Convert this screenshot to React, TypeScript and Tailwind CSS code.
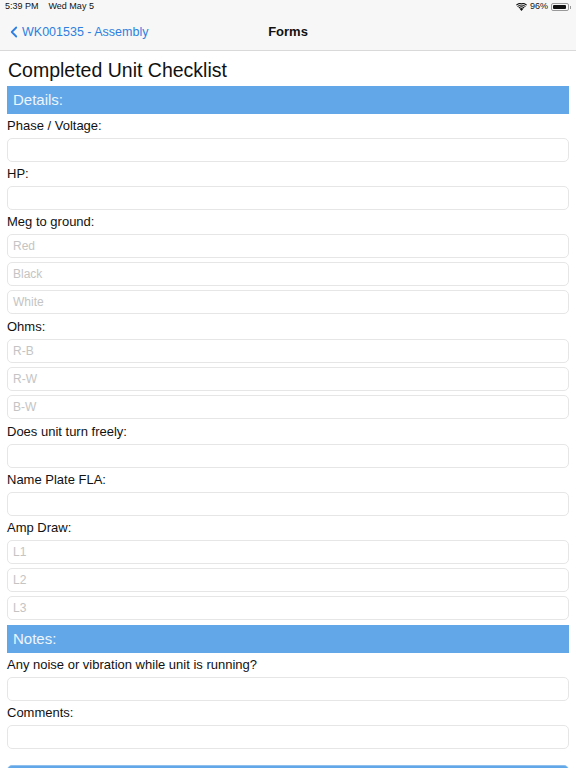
import { ChevronLeft } from 'lucide-react';

function Field({ placeholder }: { placeholder?: string }) {
  return (
    <div className="h-[24px] rounded-[5px] border border-[#e6e6e6] bg-white px-[5px] flex items-center text-[12px] text-[#c4c4c4]">
      {placeholder}
    </div>
  );
}

function Label({ text, tall }: { text: string; tall?: boolean }) {
  return (
    <div className={`${tall ? 'h-[25px]' : 'h-[24px]'} flex items-center text-[13px] text-[#111]`}>{text}</div>
  );
}

function Section({ title }: { title: string }) {
  return (
    <div className="h-[28px] bg-[#62a8e8] flex items-center px-[6px] text-[15px] text-[#eef5fd]">{title}</div>
  );
}

function Group({ label, fields, tall }: { label: string; fields: (string | undefined)[]; tall?: boolean }) {
  return (
    <div>
      <Label text={label} tall={tall} />
      <div className="flex flex-col gap-[4px]">
        {fields.map((f, i) => (
          <Field key={i} placeholder={f} />
        ))}
      </div>
    </div>
  );
}

export default function App() {
  return (
    <div className="w-[576px] h-[768px] overflow-hidden bg-white relative" style={{ fontFamily: '"Liberation Sans", Arial, sans-serif' }}>
      {/* Header */}
      <div className="bg-[#f7f7f7] border-b border-[#d9d9d9] h-[51px]">
        <div className="h-[14px] flex items-center justify-between px-[5px] text-[9px] text-[#111]">
          <div className="flex gap-[10px]">
            <span>5:39 PM</span>
            <span>Wed May 5</span>
          </div>
          <div className="flex items-center gap-[3px]">
            <svg width="11" height="8" viewBox="0 0 11 8">
              <path d="M5.5 8 L3.6 5.8 A2.8 2.8 0 0 1 7.4 5.8 Z" fill="#111" />
              <path d="M2.5 4.6 A4.4 4.4 0 0 1 8.5 4.6 L7.8 5.4 A3.4 3.4 0 0 0 3.2 5.4 Z" fill="#111" />
              <path d="M1.2 3.2 A6.2 6.2 0 0 1 9.8 3.2 L9.1 4 A5.2 5.2 0 0 0 1.9 4 Z" fill="#111" />
              <path d="M0 1.8 A8 8 0 0 1 11 1.8 L10.3 2.6 A7 7 0 0 0 0.7 2.6 Z" fill="#111" />
            </svg>
            <span>96%</span>
            <div className="flex items-center">
              <div className="w-[18px] h-[8px] rounded-[2px] border border-[#999] p-[1px]">
                <div className="h-full w-[94%] bg-[#111] rounded-[1px]" />
              </div>
              <div className="w-[1px] h-[3px] bg-[#999] ml-[1px]" />
            </div>
          </div>
        </div>
        <div className="h-[36px] relative flex items-center">
          <div className="flex items-center text-[#2f7fe0] text-[12.5px] pl-[5px]">
            <ChevronLeft size={18} strokeWidth={2.4} className="-mr-[1px]" />
            <span>WK001535 - Assembly</span>
          </div>
          <div className="absolute inset-0 flex items-center justify-center text-[13px] font-bold text-[#111]">Forms</div>
        </div>
      </div>

      {/* Body */}
      <div className="px-[7px]">
        <div className="h-[35px] flex items-end pb-[6px] text-[19.5px] text-[#111] leading-none pl-[1px]">Completed Unit Checklist</div>
        <Section title="Details:" />
        <Group label="Phase / Voltage:" fields={[undefined]} />
        <Group label="HP:" fields={[undefined]} />
        <Group label="Meg to ground:" fields={['Red', 'Black', 'White']} />
        <Group label="Ohms:" fields={['R-B', 'R-W', 'B-W']} tall />
        <Group label="Does unit turn freely:" fields={[undefined]} tall />
        <Group label="Name Plate FLA:" fields={[undefined]} />
        <Group label="Amp Draw:" fields={['L1', 'L2', 'L3']} />
        <div className="h-[5px]" />
        <Section title="Notes:" />
        <Group label="Any noise or vibration while unit is running?" fields={[undefined]} />
        <Group label="Comments:" fields={[undefined]} />
        <div className="h-[16px]" />
        <div className="h-[30px] rounded-t-[5px] bg-[#62a8e8] border border-[#8fc0ee]" />
      </div>
    </div>
  );
}
